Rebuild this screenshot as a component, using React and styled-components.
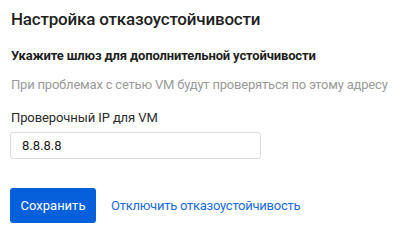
import styled, { createGlobalStyle } from 'styled-components';

const Global = createGlobalStyle`
  body {
    margin: 0;
    background: #fff;
    font-family: Roboto, "Noto Sans", sans-serif;
    color: #222;
  }
`;

const Panel = styled.div`
  padding: 7px 10px 0 11px;
  width: 398px;
  box-sizing: border-box;
`;

const Title = styled.h2`
  margin: 0;
  font-size: 17px;
  font-weight: 500;
  letter-spacing: -0.2px;
  line-height: 24px;
  color: #1f1f1f;
`;

const Heading = styled.p`
  margin: 16px 0 0;
  font-size: 13px;
  font-weight: 700;
  letter-spacing: -0.15px;
  line-height: 18px;
  color: #1f1f1f;
`;

const Hint = styled.p`
  margin: 11px 0 0;
  font-size: 13px;
  letter-spacing: -0.2px;
  line-height: 18px;
  color: #9a9a9a;
  white-space: nowrap;
`;

const Field = styled.div`
  display: flex;
  flex-direction: column;
  gap: 5px;
  margin-top: 15px;
`;

const Label = styled.label`
  font-size: 13px;
  letter-spacing: -0.1px;
  line-height: 18px;
  color: #2a2a2a;
`;

const Input = styled.input`
  width: 251px;
  height: 27px;
  box-sizing: border-box;
  margin-left: -1px;
  padding: 0 11px;
  border: 1px solid #dcdcdc;
  border-radius: 3px;
  font-family: inherit;
  font-size: 13px;
  color: #222;
  outline: none;
`;

const Actions = styled.div`
  display: flex;
  align-items: center;
  gap: 15px;
  margin-top: 29px;
`;

const Button = styled.button`
  height: 35px;
  width: 86px;
  padding: 0;
  margin-left: -1px;
  border: none;
  border-radius: 3px;
  background: #0660dc;
  color: #fff;
  font-family: inherit;
  font-size: 13px;
  cursor: pointer;
`;

const Link = styled.a`
  font-size: 13px;
  letter-spacing: -0.25px;
  color: #1a6ce0;
  text-decoration: none;
  cursor: pointer;
`;

export default function App() {
  return (
    <Panel>
      <Global />
      <Title>Настройка отказоустойчивости</Title>
      <Heading>Укажите шлюз для дополнительной устойчивости</Heading>
      <Hint>При проблемах с сетью VM будут проверяться по этому адресу</Hint>
      <Field>
        <Label>Проверочный IP для VM</Label>
        <Input defaultValue="8.8.8.8" />
      </Field>
      <Actions>
        <Button>Сохранить</Button>
        <Link>Отключить отказоустойчивость</Link>
      </Actions>
    </Panel>
  );
}
